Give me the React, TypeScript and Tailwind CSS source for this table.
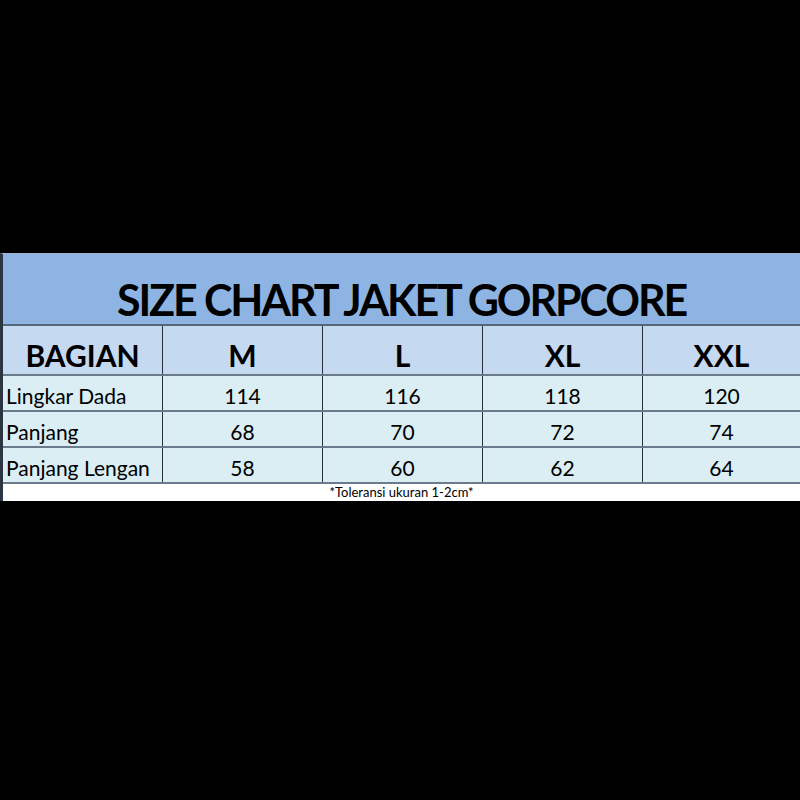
const sizes = ["M", "L", "XL", "XXL"];

const rows = [
  { name: "Lingkar Dada", values: [114, 116, 118, 120] },
  { name: "Panjang", values: [68, 70, 72, 74] },
  { name: "Panjang Lengan", values: [58, 60, 62, 64] },
];

const cols = "grid grid-cols-[160px_160px_160px_160px_1fr]";

export default function App() {
  return (
    <div className="w-[800px] h-[800px] bg-black flex flex-col pt-[253px] font-['Lato',sans-serif] text-black">
      <div className="flex flex-col border-t border-[#a3b2c6] border-l-[3px] border-l-[#2c3642]">
        {/* title */}
        <div className="h-[72px] bg-[#8db4e2] flex items-center justify-center pt-[20px] border-b-2 border-[#56677a]">
          <h1 className="text-[43px] font-bold leading-none tracking-[-2.1px]">SIZE CHART JAKET GORPCORE</h1>
        </div>

        {/* header */}
        <div className={`${cols} h-[50px] bg-[#c5d9f1] border-b-2 border-[#6b7b8c]`}>
          <div className="flex items-center justify-center pt-[10px] text-[30px] font-bold leading-none border-r border-[#25303c]">
            BAGIAN
          </div>
          {sizes.map((s, i) => (
            <div
              key={s}
              className={`flex items-center justify-center pt-[10px] text-[30px] font-bold leading-none ${i < 3 ? "border-r border-[#25303c]" : ""}`}
            >
              {s}
            </div>
          ))}
        </div>

        {/* data */}
        {rows.map((r) => (
          <div key={r.name} className={`${cols} h-[36px] bg-[#daeef3] border-b-2 border-[#6b7b8c]`}>
            <div className="flex items-center pl-[3px] pt-[4px] text-[21px] leading-none border-r border-[#25303c] whitespace-nowrap">
              {r.name}
            </div>
            {r.values.map((v, i) => (
              <div
                key={i}
                className={`flex items-center justify-center pt-[4px] text-[21px] leading-none ${i < 3 ? "border-r border-[#25303c]" : ""}`}
              >
                {v}
              </div>
            ))}
          </div>
        ))}

        {/* note */}
        <div className="h-[17px] bg-white flex items-center justify-center text-[13px] leading-none">
          *Toleransi ukuran 1-2cm*
        </div>
      </div>
    </div>
  );
}
